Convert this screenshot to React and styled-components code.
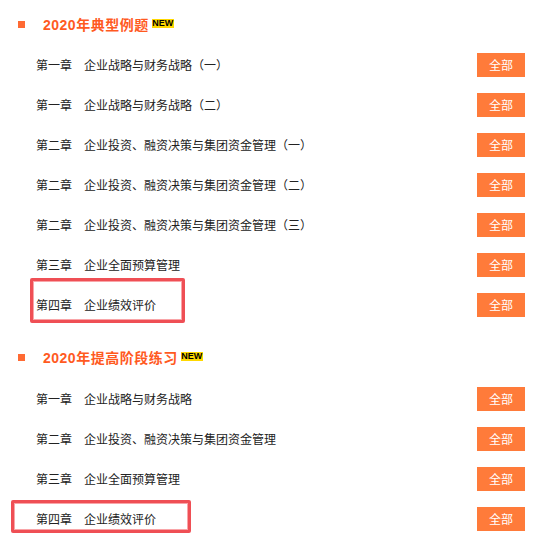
import React from "react";
import styled, { createGlobalStyle } from "styled-components";

const Global = createGlobalStyle`
  html, body { margin: 0; padding: 0; background: #fff; }
  body { font-family: "Liberation Sans", "Noto Sans CJK SC", sans-serif; overflow: hidden; }
`;
const Page = styled.div`
  width: 540px; height: 544px; box-sizing: border-box; padding: 4px 15px 0 0;
  display: flex; flex-direction: column; gap: 12px; overflow: hidden;
`;
const Section = styled.section`display: flex; flex-direction: column;`;
const Title = styled.h2`
  margin: 0 0 ${p => p.$after}px; height: 40px; padding-left: 18px;
  display: flex; align-items: center;
  font-size: 14px; font-weight: 700; color: #ff5a1f; line-height: 20px;
`;
const Bullet = styled.span`width: 7px; height: 7px; background: #ff6a33; margin-right: 18px; flex: none;`;
const TitleText = styled.span`letter-spacing: 0.5px; padding-top: 2px;`;
const NewBadge = styled.span`
  margin-left: 3px; width: 22px; height: 9px; background: #ffd800; color: #000;
  display: flex; align-items: center; justify-content: center;
  font: 700 9px/9px "Liberation Sans", sans-serif; letter-spacing: 0; margin-bottom: 1px;
`;
const Row = styled.div`
  position: relative; height: 40px; display: flex; align-items: center;
  justify-content: space-between; padding-left: 36px;
`;
const Label = styled.span`
  font-size: 12px; color: #222; white-space: pre; line-height: 20px; padding-top: 2px;
`;
const AllButton = styled.a`
  box-sizing: border-box; width: 48px; height: 24px; padding-bottom: 2px;
  background: #ff7b3a; color: #fff; font-size: 12px;
  display: flex; align-items: center; justify-content: center;
`;
const Highlight = styled.div`
  position: absolute; box-sizing: border-box; border: 3px solid #ef4f55; border-radius: 2px;
  left: ${p => p.$left}px; width: ${p => p.$width}px; top: ${p => p.$top}px; height: ${p => p.$height}px;
  box-shadow: inset 0 0 0 1px #f9a5a8;
`;

const first = [
  "第一章　企业战略与财务战略（一）",
  "第一章　企业战略与财务战略（二）",
  "第二章　企业投资、融资决策与集团资金管理（一）",
  "第二章　企业投资、融资决策与集团资金管理（二）",
  "第二章　企业投资、融资决策与集团资金管理（三）",
  "第三章　企业全面预算管理",
  "第四章　企业绩效评价",
];
const second = [
  "第一章　企业战略与财务战略",
  "第二章　企业投资、融资决策与集团资金管理",
  "第三章　企业全面预算管理",
  "第四章　企业绩效评价",
];
const sections = [
  { title: "2020年典型例题", after: 1, items: first, box: { $left: 30, $width: 155, $top: -7, $height: 45 } },
  { title: "2020年提高阶段练习", after: 2, items: second, box: { $left: 11, $width: 180, $top: 1, $height: 33 } },
];

export default function App() {
  return (
    <Page>
      <Global />
      {sections.map(s => (
        <Section key={s.title}>
          <Title $after={s.after}>
            <Bullet />
            <TitleText>{s.title}</TitleText>
            <NewBadge>NEW</NewBadge>
          </Title>
          {s.items.map((t, i) => (
            <Row key={t}>
              <Label>{t}</Label>
              <AllButton>全部</AllButton>
              {i === s.items.length - 1 && <Highlight {...s.box} />}
            </Row>
          ))}
        </Section>
      ))}
    </Page>
  );
}
